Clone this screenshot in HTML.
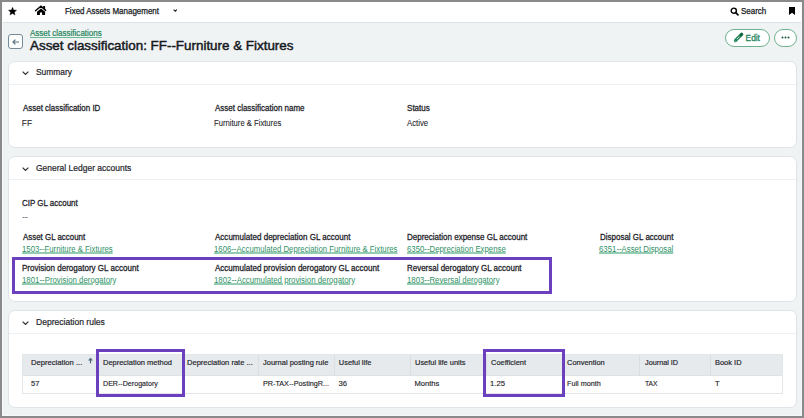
<!DOCTYPE html>
<html><head><meta charset="utf-8">
<style>
*{box-sizing:border-box;margin:0;padding:0}
html,body{width:804px;height:418px;overflow:hidden;background:#f0f3f4;font-family:"Liberation Sans",sans-serif;color:#1a1f24;position:relative}
.a{position:absolute;white-space:nowrap;line-height:1}
.t{position:absolute;white-space:nowrap;line-height:1;transform-origin:0 0}
.card{position:absolute;left:8px;width:789px;background:#fff;border:1px solid #dfe4e8;border-radius:7px}
.sep{position:absolute;left:9px;width:787px;height:1px;background:#eef1f3}
.box{position:absolute;border:3px solid #6a40be}
.vs{position:absolute;top:355px;width:1px;height:20px;background:#d8dee2}
.chev{position:absolute;left:21.9px}
</style></head><body>
<!-- nav -->
<div class="a" style="left:0;top:0;width:804px;height:23px;background:#fff;border-bottom:1px solid #dde2e6"></div>
<svg class="a" style="left:7.7px;top:6.9px" width="9.05" height="8.67" viewBox="0 0 24 23"><path d="M12 0.5l3.3 7.2 7.7.8-5.8 5.2 1.7 7.8L12 17.5l-6.9 4 1.7-7.8L1 8.5l7.7-.8z" fill="#000" stroke="#000" stroke-width="0.8" stroke-linejoin="round"/></svg>
<svg class="a" style="left:33px;top:4px" width="16" height="13" viewBox="0 0 16 13"><path d="M2.5 6.7L7.95 2.3l4.7 4.1" stroke="#000" stroke-width="1.45" fill="none" stroke-linecap="round"/><path d="M10.2 1.9h1.9v4.2l-1.9-1.6z" fill="#000"/><path d="M4 7.7L8 4.5l4.1 3.2V11.1H9.1V8.4H6.9V11.1H4z" fill="#000"/></svg>
<svg class="a" style="left:172.6px;top:9.4px" width="4.6" height="2.8" viewBox="0 0 10 6"><path d="M1.2 1.2L5 4.8l3.8-3.6" stroke="#1a1a1a" stroke-width="2.2" fill="none"/></svg>
<svg class="a" style="left:730px;top:7px" width="9.5" height="9" viewBox="0 0 24 23"><circle cx="9.5" cy="9.5" r="6.6" stroke="#000" stroke-width="3.6" fill="none"/><path d="M14.5 14.5l5.8 5.8" stroke="#000" stroke-width="4.2" stroke-linecap="round"/></svg>
<svg class="a" style="left:789px;top:7px" width="6" height="8" viewBox="0 0 12 16"><path d="M0 0h12v16l-6-4.5L0 16z" fill="#000"/></svg>

<!-- back button -->
<div class="a" style="left:8px;top:34px;width:15px;height:15px;border:1px solid #758a98;border-top-width:1.3px;border-radius:3px;background:#fcfdfd"></div>
<svg class="a" style="left:12px;top:38.6px" width="7.2" height="6" viewBox="0 0 14.4 12"><path d="M14 6H2.5M6.8 1.2L2 6l4.8 4.8" stroke="#5b7282" stroke-width="2.3" fill="none" stroke-linejoin="round"/></svg>

<!-- edit button -->
<div class="a" style="left:724.6px;top:29px;width:45.4px;height:18px;border:1px solid #6fb08e;border-radius:9px;background:#fff"></div>
<svg class="a" style="left:730px;top:30px" width="16" height="16" viewBox="0 0 16 16"><path d="M5.6 10.4L11.6 4.4" stroke="#23855a" stroke-width="3.4" stroke-linecap="round"/><path d="M4 12.4l0.9-2.6 1.7 1.7z" fill="#4aa077"/><path d="M6.8 9.2L9.6 6.4" stroke="#cfe8da" stroke-width="0.9"/><path d="M10.6 5.4L11.8 4.2" stroke="#0f6a3c" stroke-width="2.6" stroke-linecap="round"/></svg>
<div class="a" style="left:774px;top:29px;width:23px;height:18px;border:1px solid #6fb08e;border-radius:9px;background:#fff"></div>
<svg class="a" style="left:780px;top:35px" width="12" height="6" viewBox="0 0 12 6"><circle cx="2.5" cy="2.6" r="1.0" fill="#1b5a3b"/><circle cx="5.5" cy="2.6" r="1.0" fill="#1b5a3b"/><circle cx="8.5" cy="2.6" r="1.0" fill="#1b5a3b"/></svg>

<!-- cards -->
<div class="card" style="top:61px;height:87px"></div>
<div class="sep" style="top:84px"></div>
<svg class="a chev" style="top:71px" width="7" height="4.2" viewBox="0 0 16 9.6"><path d="M1.4 1.4L8 7.8l6.6-6.4" stroke="#30363c" stroke-width="2.9" fill="none"/></svg>
<div class="card" style="top:156px;height:146px"></div>
<div class="sep" style="top:179px"></div>
<svg class="a chev" style="top:166.5px" width="7" height="4.2" viewBox="0 0 16 9.6"><path d="M1.4 1.4L8 7.8l6.6-6.4" stroke="#30363c" stroke-width="2.9" fill="none"/></svg>
<div class="card" style="top:310px;height:98px"></div>
<div class="sep" style="top:333px"></div>
<svg class="a chev" style="top:320.5px" width="7" height="4.2" viewBox="0 0 16 9.6"><path d="M1.4 1.4L8 7.8l6.6-6.4" stroke="#30363c" stroke-width="2.9" fill="none"/></svg>

<!-- table -->
<div class="a" style="left:22px;top:354px;width:761px;height:40px;border:1px solid #e1e6e9;background:#fff"></div>
<div class="a" style="left:23px;top:355px;width:759px;height:21px;background:#e6eaed;border-bottom:1px solid #dde2e6"></div>
<div class="vs" style="left:98px"></div>
<div class="vs" style="left:182px"></div>
<div class="vs" style="left:258px"></div>
<div class="vs" style="left:334px"></div>
<div class="vs" style="left:410px"></div>
<div class="vs" style="left:486px"></div>
<div class="vs" style="left:562px"></div>
<div class="vs" style="left:639px"></div>
<div class="vs" style="left:710px"></div>
<svg class="a" style="left:87.8px;top:357.4px" width="5" height="7" viewBox="0 0 5 7"><path d="M0.6 3.3L2.5 0.9 4.4 3.3z" fill="#4b687b" stroke="#4b687b" stroke-width="0.5" stroke-linejoin="round"/><path d="M2.5 2.5V6.4" stroke="#4b687b" stroke-width="1.1"/></svg>

<div class="t" id="nav" style="left:64.91px;top:7px;font-size:8.3px;color:#15191d;transform:scaleX(0.9615);-webkit-text-stroke:0.25px #15191d;">Fixed Assets Management</div>
<div class="t" id="search" style="left:740.79px;top:7px;font-size:8.3px;color:#15191d;transform:scaleX(0.9628);-webkit-text-stroke:0.25px #15191d;">Search</div>
<div class="t" id="bc" style="left:29.61px;top:29px;font-size:8.3px;color:#23855a;transform:scaleX(0.9670);text-decoration:underline;text-decoration-color:#6cb892;text-underline-offset:1px;-webkit-text-stroke:0.2px #23855a;">Asset classifications</div>
<div class="t" id="title" style="left:29.97px;top:39px;font-size:13.0px;color:#15191d;transform:scaleX(1.0303);-webkit-text-stroke:0.45px #15191d;">Asset classification: FF--Furniture &amp; Fixtures</div>
<div class="t" id="h1" style="left:35.94px;top:68px;font-size:8.5px;color:#1f252b;transform:scaleX(0.9920);-webkit-text-stroke:0.2px #1f252b;">Summary</div>
<div class="t" id="h2" style="left:36.05px;top:164px;font-size:8.5px;color:#1f252b;transform:scaleX(0.9985);-webkit-text-stroke:0.2px #1f252b;">General Ledger accounts</div>
<div class="t" id="h3" style="left:36.01px;top:318px;font-size:8.5px;color:#1f252b;transform:scaleX(1.0056);-webkit-text-stroke:0.2px #1f252b;">Depreciation rules</div>
<div class="t" id="edit" style="left:745.61px;top:34px;font-size:8.3px;color:#23855a;-webkit-text-stroke:0.28px #23855a;">Edit</div>
<div class="t" id="l1" style="left:22.82px;top:104px;font-size:8.3px;color:#1f252b;-webkit-text-stroke:0.28px #1f252b;transform:scaleX(0.9587);">Asset classification ID</div>
<div class="t" id="l2" style="left:214.75px;top:104px;font-size:8.3px;color:#1f252b;-webkit-text-stroke:0.28px #1f252b;transform:scaleX(0.9610);">Asset classification name</div>
<div class="t" id="l3" style="left:406.77px;top:104px;font-size:8.3px;color:#1f252b;-webkit-text-stroke:0.28px #1f252b;transform:scaleX(0.9717);">Status</div>
<div class="t" id="v1" style="left:21.76px;top:119px;font-size:8.5px;color:#1f252b;-webkit-text-stroke:0.08px #1f252b;">FF</div>
<div class="t" id="v2" style="left:214.24px;top:119px;font-size:8.5px;color:#1f252b;-webkit-text-stroke:0.08px #1f252b;transform:scaleX(0.9008);">Furniture &amp; Fixtures</div>
<div class="t" id="v3" style="left:407.11px;top:119px;font-size:8.5px;color:#1f252b;-webkit-text-stroke:0.08px #1f252b;transform:scaleX(0.9135);">Active</div>
<div class="t" id="g1" style="left:22.18px;top:199px;font-size:8.3px;color:#1f252b;-webkit-text-stroke:0.28px #1f252b;transform:scaleX(0.9588);">CIP GL account</div>
<div class="t" id="v4" style="left:22.26px;top:213px;font-size:8.0px;color:#1f252b;-webkit-text-stroke:0.08px #1f252b;">--</div>
<div class="t" id="g2" style="left:22.57px;top:233px;font-size:8.3px;color:#1f252b;-webkit-text-stroke:0.28px #1f252b;transform:scaleX(0.9531);">Asset GL account</div>
<div class="t" id="g3" style="left:214.53px;top:233px;font-size:8.3px;color:#1f252b;-webkit-text-stroke:0.28px #1f252b;transform:scaleX(0.9681);">Accumulated depreciation GL account</div>
<div class="t" id="g4" style="left:406.91px;top:233px;font-size:8.3px;color:#1f252b;-webkit-text-stroke:0.28px #1f252b;transform:scaleX(0.9650);">Depreciation expense GL account</div>
<div class="t" id="g5" style="left:599.62px;top:233px;font-size:8.3px;color:#1f252b;-webkit-text-stroke:0.28px #1f252b;transform:scaleX(0.9623);">Disposal GL account</div>
<div class="t" id="k1" style="left:22.24px;top:245px;font-size:8.5px;color:#2f9166;transform:scaleX(0.9146);text-decoration:underline;text-decoration-color:#94ccb2;text-underline-offset:0px;text-decoration-thickness:1.5px;">1503--Furniture &amp; Fixtures</div>
<div class="t" id="k2" style="left:213.82px;top:245px;font-size:8.5px;color:#2f9166;transform:scaleX(0.9135);text-decoration:underline;text-decoration-color:#94ccb2;text-underline-offset:0px;text-decoration-thickness:1.5px;">1606--Accumulated Depreciation Furniture &amp; Fixtures</div>
<div class="t" id="k3" style="left:406.73px;top:245px;font-size:8.5px;color:#2f9166;transform:scaleX(0.9164);text-decoration:underline;text-decoration-color:#94ccb2;text-underline-offset:0px;text-decoration-thickness:1.5px;">6350--Depreciation Expense</div>
<div class="t" id="k4" style="left:598.60px;top:245px;font-size:8.5px;color:#2f9166;transform:scaleX(0.9191);text-decoration:underline;text-decoration-color:#94ccb2;text-underline-offset:0px;text-decoration-thickness:1.5px;">6351--Asset Disposal</div>
<div class="t" id="g6" style="left:21.87px;top:264px;font-size:8.3px;color:#1f252b;-webkit-text-stroke:0.28px #1f252b;transform:scaleX(0.9676);">Provision derogatory GL account</div>
<div class="t" id="g7" style="left:215.13px;top:264px;font-size:8.3px;color:#1f252b;-webkit-text-stroke:0.28px #1f252b;transform:scaleX(0.9664);">Accumulated provision derogatory GL account</div>
<div class="t" id="g8" style="left:406.68px;top:264px;font-size:8.3px;color:#1f252b;-webkit-text-stroke:0.28px #1f252b;transform:scaleX(0.9613);">Reversal derogatory GL account</div>
<div class="t" id="k5" style="left:22.04px;top:276px;font-size:8.5px;color:#2f9166;transform:scaleX(0.9221);text-decoration:underline;text-decoration-color:#94ccb2;text-underline-offset:0px;text-decoration-thickness:1.5px;">1801--Provision derogatory</div>
<div class="t" id="k6" style="left:213.81px;top:276px;font-size:8.5px;color:#2f9166;transform:scaleX(0.9219);text-decoration:underline;text-decoration-color:#94ccb2;text-underline-offset:0px;text-decoration-thickness:1.5px;">1802--Accumulated provision derogatory</div>
<div class="t" id="k7" style="left:406.61px;top:276px;font-size:8.5px;color:#2f9166;transform:scaleX(0.9155);text-decoration:underline;text-decoration-color:#94ccb2;text-underline-offset:0px;text-decoration-thickness:1.5px;">1803--Reversal derogatory</div>
<div class="t" id="t1" style="left:31.33px;top:359px;font-size:7.4px;color:#1f252b;-webkit-text-stroke:0.18px #1f252b;transform:scaleX(1.0327);">Depreciation ...</div>
<div class="t" id="t2" style="left:102.80px;top:359px;font-size:7.4px;color:#1f252b;-webkit-text-stroke:0.18px #1f252b;transform:scaleX(1.0119);">Depreciation method</div>
<div class="t" id="t3" style="left:186.67px;top:359px;font-size:7.4px;color:#1f252b;-webkit-text-stroke:0.18px #1f252b;transform:scaleX(1.0195);">Depreciation rate ...</div>
<div class="t" id="t4" style="left:263.42px;top:359px;font-size:7.4px;color:#1f252b;-webkit-text-stroke:0.18px #1f252b;transform:scaleX(1.0133);">Journal posting rule</div>
<div class="t" id="t5" style="left:338.87px;top:359px;font-size:7.4px;color:#1f252b;-webkit-text-stroke:0.18px #1f252b;">Useful life</div>
<div class="t" id="t6" style="left:414.51px;top:359px;font-size:7.4px;color:#1f252b;-webkit-text-stroke:0.18px #1f252b;transform:scaleX(1.0082);">Useful life units</div>
<div class="t" id="t7" style="left:490.88px;top:359px;font-size:7.4px;color:#1f252b;-webkit-text-stroke:0.18px #1f252b;transform:scaleX(1.0076);">Coefficient</div>
<div class="t" id="t8" style="left:566.81px;top:359px;font-size:7.4px;color:#1f252b;-webkit-text-stroke:0.18px #1f252b;transform:scaleX(1.0086);">Convention</div>
<div class="t" id="t9" style="left:644.75px;top:359px;font-size:7.4px;color:#1f252b;-webkit-text-stroke:0.18px #1f252b;transform:scaleX(0.9829);">Journal ID</div>
<div class="t" id="t10" style="left:714.66px;top:359px;font-size:7.4px;color:#1f252b;-webkit-text-stroke:0.18px #1f252b;transform:scaleX(1.0090);">Book ID</div>
<div class="t" id="d1" style="left:31.11px;top:380px;font-size:7.6px;color:#1f252b;-webkit-text-stroke:0.15px #1f252b;">57</div>
<div class="t" id="d2" style="left:103.29px;top:380px;font-size:7.6px;color:#1f252b;-webkit-text-stroke:0.15px #1f252b;transform:scaleX(0.9357);">DER--Derogatory</div>
<div class="t" id="d3" style="left:263.21px;top:380px;font-size:7.6px;color:#1f252b;-webkit-text-stroke:0.15px #1f252b;transform:scaleX(0.9496);">PR-TAX--PostingR...</div>
<div class="t" id="d4" style="left:338.45px;top:380px;font-size:7.6px;color:#1f252b;-webkit-text-stroke:0.15px #1f252b;">36</div>
<div class="t" id="d5" style="left:414.44px;top:380px;font-size:7.6px;color:#1f252b;-webkit-text-stroke:0.15px #1f252b;">Months</div>
<div class="t" id="d6" style="left:490.23px;top:380px;font-size:7.6px;color:#1f252b;-webkit-text-stroke:0.15px #1f252b;transform:scaleX(1.0165);">1.25</div>
<div class="t" id="d7" style="left:567.25px;top:380px;font-size:7.6px;color:#1f252b;-webkit-text-stroke:0.15px #1f252b;transform:scaleX(0.9525);">Full month</div>
<div class="t" id="d8" style="left:645.08px;top:380px;font-size:7.6px;color:#1f252b;-webkit-text-stroke:0.15px #1f252b;transform:scaleX(0.8818);">TAX</div>
<div class="t" id="d9" style="left:715.10px;top:380px;font-size:7.6px;color:#1f252b;-webkit-text-stroke:0.15px #1f252b;">T</div>

<!-- annotation boxes -->
<div class="box" style="left:12px;top:257px;width:540px;height:37px"></div>
<div class="box" style="left:96px;top:349px;width:89px;height:48px"></div>
<div class="box" style="left:483px;top:349px;width:82px;height:48px"></div>

<!-- screenshot frame -->
<div class="a" style="left:2px;top:2px;width:1px;height:414px;background:#f6f9fa"></div>
<div class="a" style="left:801px;top:2px;width:1px;height:414px;background:#f6f9fa"></div>
<div class="a" style="left:2px;top:415px;width:800px;height:1px;background:#f6f9fa"></div>
<div class="a" style="left:0;top:0;width:804px;height:2px;background:#8a8a8a"></div>
<div class="a" style="left:0;top:416px;width:804px;height:2px;background:#8a8a8a"></div>
<div class="a" style="left:0;top:0;width:2px;height:418px;background:#8a8a8a"></div>
<div class="a" style="left:802px;top:0;width:2px;height:418px;background:#8a8a8a"></div>
</body></html>
